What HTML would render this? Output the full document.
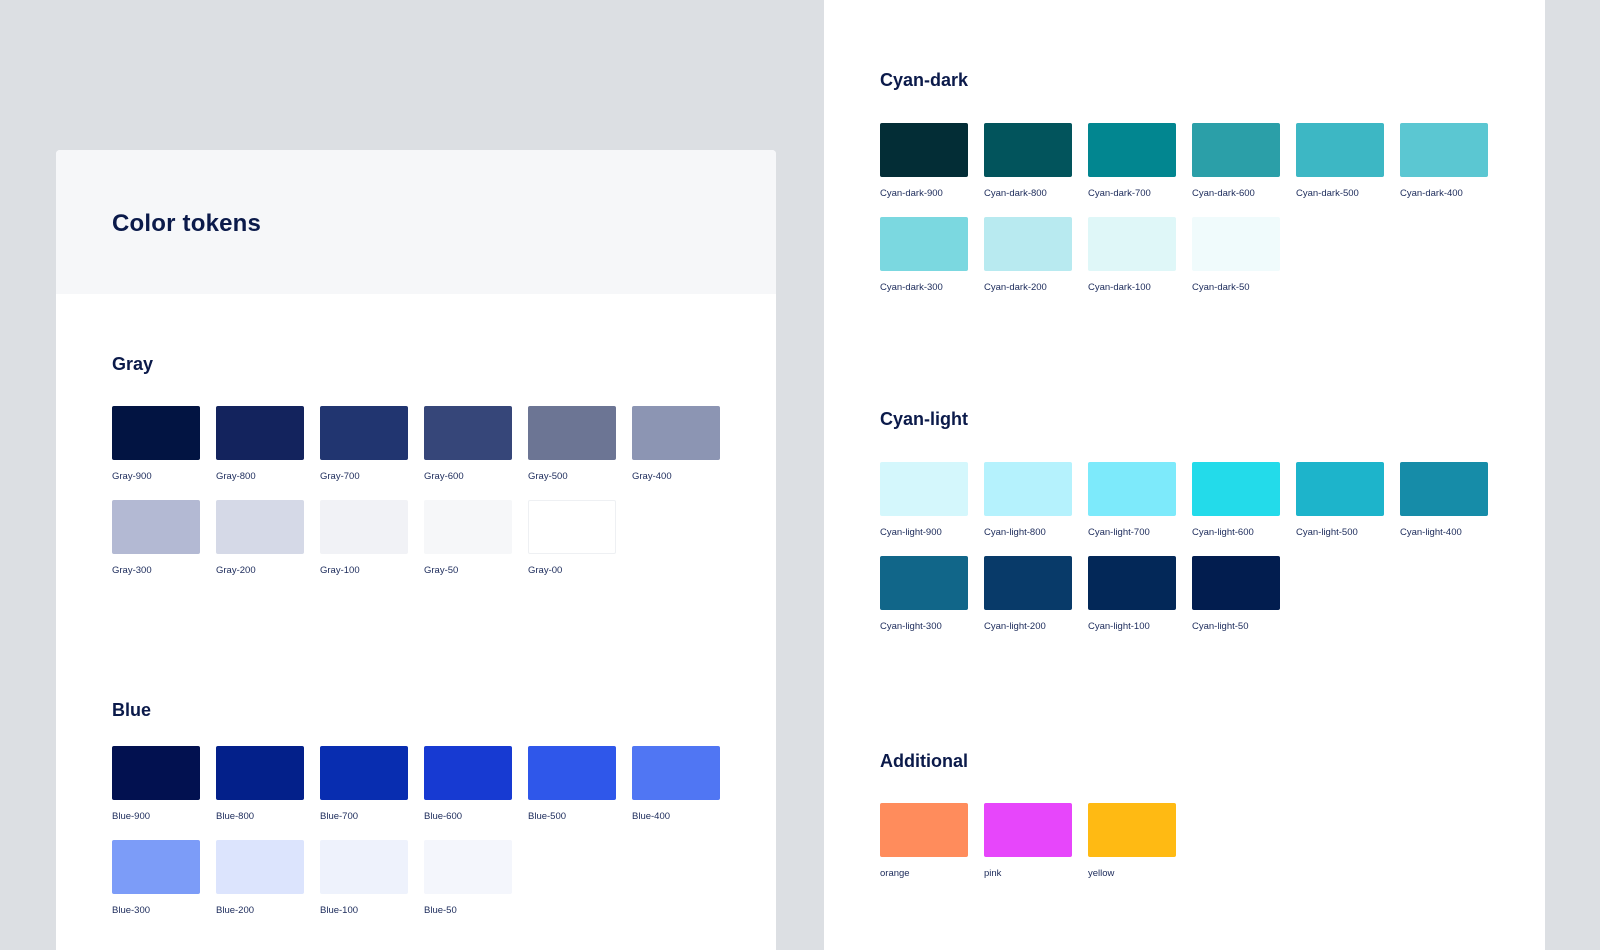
<!DOCTYPE html>
<html><head><meta charset="utf-8"><style>
*{margin:0;padding:0;box-sizing:border-box}
body{width:1600px;height:950px;background:#dcdfe3;position:relative;overflow:hidden;font-family:"Liberation Sans",sans-serif;color:#0b1a4a}
.p{position:absolute}
.card{left:56px;top:150px;width:720px;height:800px;background:#fff;border-radius:4px 4px 0 0;overflow:hidden}
.hdr{left:0;top:0;width:720px;height:144px;background:#f6f7f9}
.rp{left:824px;top:0;width:721px;height:950px;background:#fff}
h1{position:absolute;font-size:24px;line-height:24px;font-weight:bold;letter-spacing:0.2px}
h2{position:absolute;font-size:18px;line-height:18px;font-weight:bold}
.s{position:absolute;width:88px;height:54px;border-radius:2px}
.l{position:absolute;font-size:9.5px;line-height:10px;color:#1b2a5a}
</style></head><body>
<div class="p card"><div class="p hdr"></div></div>
<div class="p rp"></div>
<h1 style="left:112px;top:212px">Color tokens</h1>
<div id="c"></div>
<script>
var c=document.getElementById('c'),h='';
function sec(x,y,title,rows){
 h+='<h2 style="left:'+x+'px;top:'+(y+2)+'px">'+title+'</h2>';
 rows.forEach(function(r){r.items.forEach(function(it,i){var sx=x+i*104;
  h+='<div class="s" style="left:'+sx+'px;top:'+r.y+'px;background:'+it[1]+(it[1]=='#ffffff'?';border:1px solid #eef0f3':'')+'"></div>';
  h+='<div class="l" style="left:'+sx+'px;top:'+(r.y+66)+'px">'+it[0]+'</div>';});});
}
function mk(p,names,cols){return names.map(function(n,i){return [p+n,cols[i]]})}
var g=mk('Gray-',['900','800','700','600','500','400','300','200','100','50','00'],['#021442','#13235d','#213570','#364679','#6c7594','#8c95b3','#b3b9d3','#d5d9e7','#f1f2f6','#f6f7f9','#ffffff']);
sec(112,353,'Gray',[{y:406,items:g.slice(0,6)},{y:500,items:g.slice(6)}]);
var b=mk('Blue-',['900','800','700','600','500','400','300','200','100','50'],['#021150','#03208a','#082db0','#173ad2','#2f57ea','#5076f3','#7c9cf8','#dce4fd','#eef2fc','#f4f6fc']);
sec(112,699,'Blue',[{y:746,items:b.slice(0,6)},{y:840,items:b.slice(6)}]);
var cd=mk('Cyan-dark-',['900','800','700','600','500','400','300','200','100','50'],['#032d36','#02545c','#028690','#2b9fa8','#3db7c4','#5bc7d2','#7bd8e0','#b8eaf0','#dff7f8','#f0fbfc']);
sec(880,69,'Cyan-dark',[{y:123,items:cd.slice(0,6)},{y:217,items:cd.slice(6)}]);
var cl=mk('Cyan-light-',['900','800','700','600','500','400','300','200','100','50'],['#d4f7fc','#b5f2fd','#7deafb','#23dbea','#1db4cb','#168ca8','#116689','#083a69','#032858','#021d4f']);
sec(880,408,'Cyan-light',[{y:462,items:cl.slice(0,6)},{y:556,items:cl.slice(6)}]);
sec(880,750,'Additional',[{y:803,items:[['orange','#ff8c5c'],['pink','#e746fb'],['yellow','#ffba13']]}]);
c.innerHTML=h;
</script>
</body></html>
